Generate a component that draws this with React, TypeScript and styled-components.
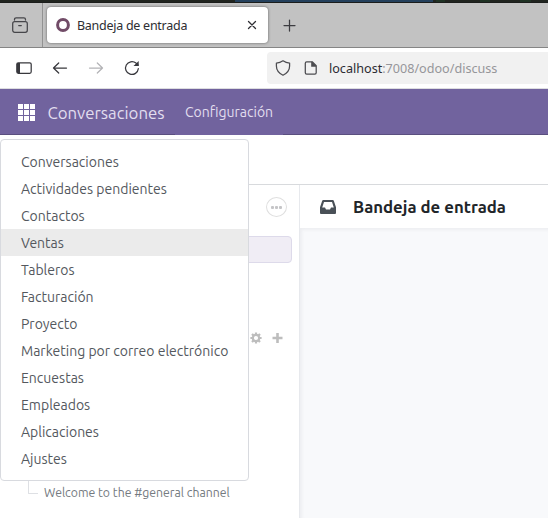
import React from "react";
import styled, { createGlobalStyle } from "styled-components";

const Global = createGlobalStyle`
  * { box-sizing: border-box; }
  body { margin: 0; overflow: hidden; background: #fff; font-family: Ubuntu, "Noto Sans", sans-serif; }
  svg { display: block; flex: none; }
`;

const Window = styled.div`
  width: 548px;
  height: 518px;
  display: flex;
  flex-direction: column;
  overflow: hidden;
`;
const Desktop = styled.div`
  height: 3px;
  flex: none;
  background: linear-gradient(90deg, #20241f 235px, #24405c 235px 433px, #20241f 433px 436px, #1f3224 436px 445px, #20241f 445px 480px, #1f3224 480px 490px, #20241f 490px 520px, #1f3224 520px 531px, #20241f 531px);
  border-bottom: 1px solid #1b1d1b;
`;
const TabBar = styled.div`
  height: 45px;
  flex: none;
  display: flex;
  background: #c2c2c2;
  border-bottom: 1px solid #858585;
`;
const Archive = styled.div`
  width: 43px;
  padding: 14px 0 0 12px;
  border-right: 1px solid #929292;
`;
const Tab = styled.div`
  width: 221px;
  height: 36px;
  margin: 4px 0 0 4px;
  padding: 0 11px 0 9px;
  display: flex;
  align-items: center;
  border-radius: 4px;
  background: #fff;
  box-shadow: 0 0 3px rgba(0, 0, 0, 0.5);
  color: #2e2e33;
`;
const TabTitle = styled.span`
  flex: 1;
  margin-left: 7px;
  padding-top: 2px;
  font: 12.5px/18px "Noto Sans", sans-serif;
  letter-spacing: -0.27px;
  white-space: nowrap;
`;
const NewTab = styled.div`
  padding: 16px 0 0 15px;
`;
const Toolbar = styled.div`
  height: 41px;
  flex: none;
  display: flex;
  align-items: center;
  padding: 0 0 1px 16px;
  gap: 20px;
  background: #fff;
  border-bottom: 1px solid #dddde0;
  color: #38383d;
`;
const Address = styled.div`
  flex: 1;
  height: 32px;
  margin-left: 107px;
  padding-left: 8px;
  display: flex;
  align-items: center;
  gap: 13px;
  background: #f1f1f1;
  border-radius: 4px 0 0 4px;
`;
const Url = styled.span`
  padding-top: 2px;
  font: 12.6px/18px "Noto Sans", sans-serif;
  color: #96969a;
  white-space: nowrap;
  b { font-weight: 400; color: #2c2c31; }
`;
const Navbar = styled.nav`
  height: 46px;
  flex: none;
  display: flex;
  background: #71639e;
  color: #e2deef;
`;
const NavPart = styled.div<{ $width?: number; $lined?: boolean }>`
  ${(p) => (p.$width ? `width: ${p.$width}px;` : "flex: 1;")}
  display: flex;
  align-items: center;
  border-bottom: 1px solid ${(p) => (p.$lined ? "#5a4f7f" : "#71639e")};
`;
const Label = styled.span<{ $size: number; $left?: number; $weight?: number; $shift?: number }>`
  font-size: ${(p) => p.$size}px;
  font-weight: ${(p) => p.$weight ?? 400};
  margin-left: ${(p) => p.$left ?? 0}px;
  margin-top: ${(p) => p.$shift ?? 0}px;
  white-space: nowrap;
`;
const Discuss = styled.main`
  flex: 1;
  position: relative;
  display: flex;
  flex-direction: column;
`;
const ControlPanel = styled.div`
  height: 50px;
  flex: none;
  border-bottom: 1px solid #d8dadd;
`;
const Columns = styled.div`
  flex: 1;
  display: flex;
`;
const Sidebar = styled.aside`
  width: 300px;
  border-right: 1px solid #e7e9ed;
  padding: 12px 7px 0 0;
  display: flex;
  flex-direction: column;
`;
const More = styled.div`
  width: 21px;
  height: 20px;
  margin: 0 5px 0 auto;
  border: 1px solid #dfdfdf;
  border-radius: 50%;
  display: flex;
  align-items: center;
  justify-content: center;
  gap: 1px;
`;
const Dot = styled.i`
  width: 3px;
  height: 3px;
  border-radius: 1px;
  background: #c5c5c7;
`;
const Mailbox = styled.div`
  height: 27px;
  margin-top: 19px;
  border: 1px solid #dddaea;
  border-radius: 4px;
  background: #f0edf5;
`;
const ChannelTools = styled.div`
  margin: 69px 8px 0 auto;
  display: flex;
  align-items: center;
  gap: 10px;
  color: #bdbdbd;
`;
const Thread = styled.div`
  margin: 135px 0 0 28px;
  display: flex;
  align-items: flex-start;
  color: #747a80;
`;
const Elbow = styled.i`
  width: 10px;
  height: 15px;
  border-left: 1px solid #dee0e4;
  border-bottom: 1px solid #dee0e4;
  border-bottom-left-radius: 1px;
`;
const Conversation = styled.section`
  flex: 1;
  display: flex;
  flex-direction: column;
`;
const Heading = styled.header`
  height: 43px;
  display: flex;
  align-items: center;
  padding-left: 20px;
  color: #212529;
`;
const Feed = styled.div`
  flex: 1;
  background: #f8f9fb;
  box-shadow: inset 2px 2px 3px rgba(60, 70, 90, 0.06);
`;
const Menu = styled.div`
  position: absolute;
  left: 0;
  top: 4px;
  width: 249px;
  padding: 8px 0;
  background: #fff;
  border: 1px solid #d8dadf;
  border-radius: 4px;
`;
const MenuItem = styled.div<{ $active?: boolean }>`
  height: 27px;
  padding-left: 20px;
  display: flex;
  align-items: center;
  color: #54585e;
  background: ${(p) => (p.$active ? "#ebebeb" : "transparent")};
`;

const apps = [
  "Conversaciones",
  "Actividades pendientes",
  "Contactos",
  "Ventas",
  "Tableros",
  "Facturación",
  "Proyecto",
  "Marketing por correo electrónico",
  "Encuestas",
  "Empleados",
  "Aplicaciones",
  "Ajustes",
];

const line = { fill: "none", stroke: "currentColor", strokeWidth: 1.25, strokeLinecap: "round", strokeLinejoin: "round" } as const;

export default function App() {
  return (
    <Window>
      <Global />
      <Desktop />
      <TabBar>
        <Archive>
          <svg width="16" height="16" viewBox="0 0 16 16" color="#46464a" {...line}>
            <path d="M2.5 3V2.4Q2.5.8 4.1.8h7.8q1.6 0 1.6 1.6V3M6.7 8.5h2.6" />
            <rect x=".7" y="4.7" width="14.6" height="10.6" rx="2" />
          </svg>
        </Archive>
        <Tab>
          <svg width="14" height="14" viewBox="0 0 14 14">
            <circle cx="7" cy="7" r="5.4" fill="none" stroke="#714b67" strokeWidth="3" />
          </svg>
          <TabTitle>Bandeja de entrada</TabTitle>
          <svg width="10" height="10" viewBox="0 0 10 10" {...line}>
            <path d="m1.5 1.5 7 7m0-7-7 7" />
          </svg>
        </Tab>
        <NewTab>
          <svg width="13" height="13" viewBox="0 0 13 13" color="#3c3c40" {...line}>
            <path d="M6.5 1v11M1 6.5h11" />
          </svg>
        </NewTab>
      </TabBar>
      <Toolbar>
        <svg width="16" height="14" viewBox="0 0 16 14" {...line}>
          <rect x=".8" y="1.8" width="14.4" height="10.5" rx="1.5" />
          <path d="M1 2h3v10H1z" fill="currentColor" stroke="none" />
        </svg>
        <svg width="16" height="14" viewBox="0 0 16 14" {...line}>
          <path d="M14.5 7H1.5m5.2-5L1.5 7l5.2 5" />
        </svg>
        <svg width="16" height="14" viewBox="0 0 16 14" color="#b3b3b6" {...line}>
          <path d="M1.5 7h13M9.3 2l5.2 5-5.2 5" />
        </svg>
        <svg width="16" height="16" viewBox="0 0 16 16" {...line}>
          <path d="M14.3 8.7a6.4 6.4 0 1 1-2.3-5.6l2.2 2" />
          <path d="M14.7 1v5H9.5z" fill="currentColor" stroke="none" />
        </svg>
        <Address>
          <svg width="16" height="16" viewBox="0 0 16 16" color="#4c4c50" {...line}>
            <path d="M8 .8Q5 2.9 1.4 3.1V6q0 6 6.6 9.2Q14.6 12 14.6 6V3.1Q11 2.9 8 .8z" />
          </svg>
          <svg width="12" height="14" viewBox="0 0 12 14" overflow="visible" color="#4c4c50" {...line}>
            <path d="M2.7.8h5.500l4 4v7q0 1.400-1.400 1.400H2.700Q1.300 13.200 1.300 11.800V2.200Q1.300.8 2.700.8z" />
            <path d="M7.200.8v5h5v-1l-4-4z" fill="currentColor" stroke="none" />
          </svg>
          <Url><b>localhost</b>:7008/odoo/discuss</Url>
        </Address>
      </Toolbar>
      <Navbar>
        <NavPart $width={175} $lined>
          <svg width="36" height="19" viewBox="0 0 36 19" fill="#fff">
            {[2, 8, 14].map((y) => [18, 24, 30].map((x) => <rect key={`${x}-${y}`} x={x} y={y} width="5" height="5" />))}
          </svg>
          <Label $size={16.8} $left={11.4} $shift={2}>Conversaciones</Label>
        </NavPart>
        <NavPart $width={108}>
          <Label $size={14} $left={10}>Configuración</Label>
        </NavPart>
        <NavPart $lined />
      </Navbar>
      <Discuss>
        <ControlPanel />
        <Columns>
          <Sidebar>
            <More><Dot /><Dot /><Dot /></More>
            <Mailbox />
            <ChannelTools>
              <svg width="12" height="12" viewBox="0 0 12 12" fill="none" stroke="currentColor">
                <circle cx="6" cy="6" r="3.2" strokeWidth="2.2" />
                <path strokeWidth="2.2" d="M6 .4v2M6 9.6v2M.4 6h2M9.6 6h2M2 2l1.4 1.4M8.6 8.6 10 10M2 10l1.4-1.4M8.6 3.4 10 2" />
              </svg>
              <svg width="12" height="12" viewBox="0 0 12 12" fill="none" stroke="currentColor">
                <path d="M5.5 1v10M.5 6h10" strokeWidth="2.6" />
              </svg>
            </ChannelTools>
            <Thread>
              <Elbow />
              <Label $size={12.25} $left={6} $shift={6.5}>Welcome to the #general channel</Label>
            </Thread>
          </Sidebar>
          <Conversation>
            <Heading>
              <svg width="16" height="14" viewBox="0 0 16 14" fill="#495057">
                <path fillRule="evenodd" d="M3.2 0h9.6q.7 0 1 .7L16 7.2V13q0 1-1 1H1q-1 0-1-1V7.2L2.2.7Q2.5 0 3.2 0zM4 2 2.2 7.500H5l1 2h4l1-2h2.800L12 2z" />
              </svg>
              <Label $size={16.8} $left={17} $weight={700}>Bandeja de entrada</Label>
            </Heading>
            <Feed />
          </Conversation>
        </Columns>
        <Menu>
          {apps.map((name) => (
            <MenuItem key={name} $active={name === "Ventas"}>
              <Label $size={14}>{name}</Label>
            </MenuItem>
          ))}
        </Menu>
      </Discuss>
    </Window>
  );
}
